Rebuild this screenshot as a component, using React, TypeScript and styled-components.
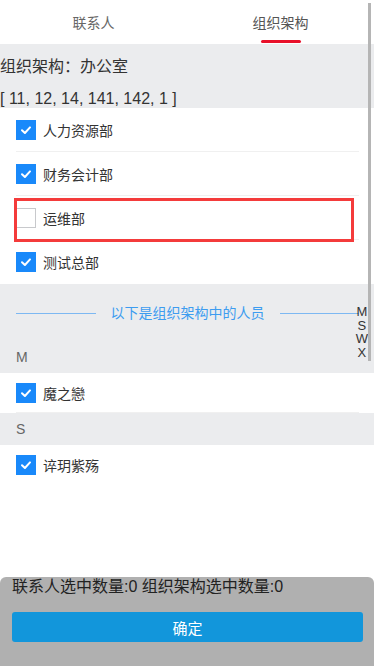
import React, { useState } from 'react';
import styled, { createGlobalStyle } from 'styled-components';

const GlobalStyle = createGlobalStyle`
  html, body {
    margin: 0;
    padding: 0;
    background: #fff;
    font-family: "Liberation Sans", "Noto Sans CJK SC", sans-serif;
  }
  * { box-sizing: border-box; }
`;

interface Dept {
  id: number;
  name: string;
  checked: boolean;
  highlight?: boolean;
}

interface PersonGroup {
  letter: string;
  people: { name: string; checked: boolean }[];
}

const depts: Dept[] = [
  { id: 1, name: '人力资源部', checked: true },
  { id: 2, name: '财务会计部', checked: true },
  { id: 3, name: '运维部', checked: false, highlight: true },
  { id: 4, name: '测试总部', checked: true },
];

const groups: PersonGroup[] = [
  { letter: 'M', people: [{ name: '魔之戀', checked: true }] },
  { letter: 'S', people: [{ name: '谇玥紫殇', checked: true }] },
];

const indexLetters = ['M', 'S', 'W', 'X'];

function CheckBox({ checked }: { checked: boolean }) {
  return (
    <Box $checked={checked}>
      {checked && (
        <svg width="12" height="12" viewBox="0 0 12 12">
          <path d="M2 6.2 L4.9 9 L10 3.4" fill="none" stroke="#fff" strokeWidth="2" strokeLinecap="round" strokeLinejoin="round" />
        </svg>
      )}
    </Box>
  );
}

export default function App() {
  const [tab, setTab] = useState(1);

  return (
    <Page>
      <GlobalStyle />
      <Tabs>
        {['联系人', '组织架构'].map((t, i) => (
          <Tab key={t} $active={tab === i} onClick={() => setTab(i)}>
            {t}
          </Tab>
        ))}
      </Tabs>
      <Scroll>
        <OrgHeader>
          <OrgTitle>组织架构：办公室</OrgTitle>
          <OrgPath>[ 11, 12, 14, 141, 142, 1 ]</OrgPath>
        </OrgHeader>
        <List>
          {depts.map((d, i) => (
            <DeptRow key={d.id} $last={i === depts.length - 1}>
              <CheckBox checked={d.checked} />
              <ItemName>{d.name}</ItemName>
              {d.highlight && <Highlight />}
            </DeptRow>
          ))}
        </List>
        <Separator>
          <Line />
          <SeparatorText>以下是组织架构中的人员</SeparatorText>
          <Line />
        </Separator>
        {groups.map((g, gi) => (
          <div key={g.letter}>
            <LetterHeader>{g.letter}</LetterHeader>
            {g.people.map((p, pi) => (
              <PersonRow
                key={p.name}
                $last={gi === groups.length - 1 && pi === g.people.length - 1}
              >
                <CheckBox checked={p.checked} />
                <ItemName>{p.name}</ItemName>
              </PersonRow>
            ))}
          </div>
        ))}
        <IndexBar>
          {indexLetters.map((l) => (
            <IndexLetter key={l}>{l}</IndexLetter>
          ))}
        </IndexBar>
      </Scroll>
      <Footer>
        <Count>联系人选中数量:0 组织架构选中数量:0</Count>
        <ConfirmButton>确定</ConfirmButton>
      </Footer>
      <ScrollThumb />
    </Page>
  );
}

const Page = styled.div`
  display: flex;
  flex-direction: column;
  width: 100%;
  height: 100vh;
  overflow: hidden;
`;

const Tabs = styled.nav`
  display: flex;
  height: 44px;
  background: #fff;
  flex-shrink: 0;
`;

const Tab = styled.div<{ $active: boolean }>`
  flex: 1;
  position: relative;
  display: flex;
  align-items: center;
  justify-content: center;
  font-size: 14px;
  color: ${({ $active }) => ($active ? '#555' : '#666')};
  cursor: pointer;

  &::after {
    content: '';
    display: ${({ $active }) => ($active ? 'block' : 'none')};
    position: absolute;
    bottom: 1px;
    left: 50%;
    width: 40px;
    height: 3px;
    margin-left: -20px;
    border-radius: 2px;
    background: #e8102a;
  }
`;

/* overlay scroll indicator of the list */
const ScrollThumb = styled.div`
  position: fixed;
  z-index: 10;
  top: 3px;
  right: 3px;
  width: 3px;
  height: 358px;
  background: #b5b5b5;
  pointer-events: none;
`;

const Scroll = styled.main`
  flex: 1;
  position: relative;
  overflow: hidden;
`;

const OrgHeader = styled.section`
  background: #ebecee;
  padding-top: 8px;
  height: 64px;
  color: #333;
  font-size: 16px;
`;

const OrgTitle = styled.div`
  line-height: 30px;
`;

const OrgPath = styled.div`
  margin-top: 8px;
  line-height: 18px;
`;

const List = styled.section`
  background: #fff;
`;

const DeptRow = styled.div<{ $last: boolean }>`
  position: relative;
  display: flex;
  align-items: center;
  gap: 7px;
  height: 44px;
  margin: 0 15px 0 16px;
  border-bottom: ${({ $last }) => ($last ? 'none' : '1px solid #f0f0f0')};
`;

const Highlight = styled.div`
  position: absolute;
  top: 2px;
  left: -2px;
  right: 5px;
  height: 44px;
  border: 3px solid #f43b3b;
`;

const Box = styled.span<{ $checked: boolean }>`
  display: inline-flex;
  align-items: center;
  justify-content: center;
  width: 20px;
  height: 20px;
  flex-shrink: 0;
  background: ${({ $checked }) => ($checked ? '#1989fa' : '#fff')};
  border: ${({ $checked }) => ($checked ? 'none' : '1px solid #c8c9cc')};
`;

const ItemName = styled.span`
  font-size: 14px;
  color: #333;
`;

const Separator = styled.div`
  display: flex;
  align-items: center;
  gap: 15px;
  background: #ebecee;
  padding: 18px 15px 17px 16px;
  height: 57px;
`;

const Line = styled.div`
  flex: 1;
  height: 1px;
  background: #7db8f2;
`;

const SeparatorText = styled.span`
  font-size: 14px;
  line-height: 22px;
  color: #3d9cf0;
`;

const LetterHeader = styled.div`
  background: #ebecee;
  height: 32px;
  line-height: 32px;
  padding-left: 16px;
  font-size: 14px;
  color: #666;
`;

const PersonRow = styled.div<{ $last: boolean }>`
  display: flex;
  align-items: center;
  gap: 7px;
  height: 40px;
  margin: 0 15px 0 16px;
  border-bottom: ${({ $last }) => ($last ? 'none' : '1px solid #f0f0f0')};
`;

const IndexBar = styled.div`
  position: absolute;
  top: 261px;
  right: 6px;
  display: flex;
  flex-direction: column;
  align-items: center;
`;

const IndexLetter = styled.span`
  font-size: 13px;
  line-height: 13.7px;
  color: #333;
`;

const Footer = styled.footer`
  flex-shrink: 0;
  height: 89px;
  background: #b0b0b0;
  border-radius: 6px 6px 0 0;
  padding: 0 11px 24px 12px;
`;

const Count = styled.div`
  font-size: 16px;
  line-height: 20px;
  color: #222;
`;

const ConfirmButton = styled.button`
  display: block;
  width: 100%;
  height: 30px;
  margin-top: 15px;
  border: none;
  border-radius: 3px;
  background: #1296db;
  color: #fff;
  font-family: inherit;
  font-size: 15px;
  cursor: pointer;
`;
